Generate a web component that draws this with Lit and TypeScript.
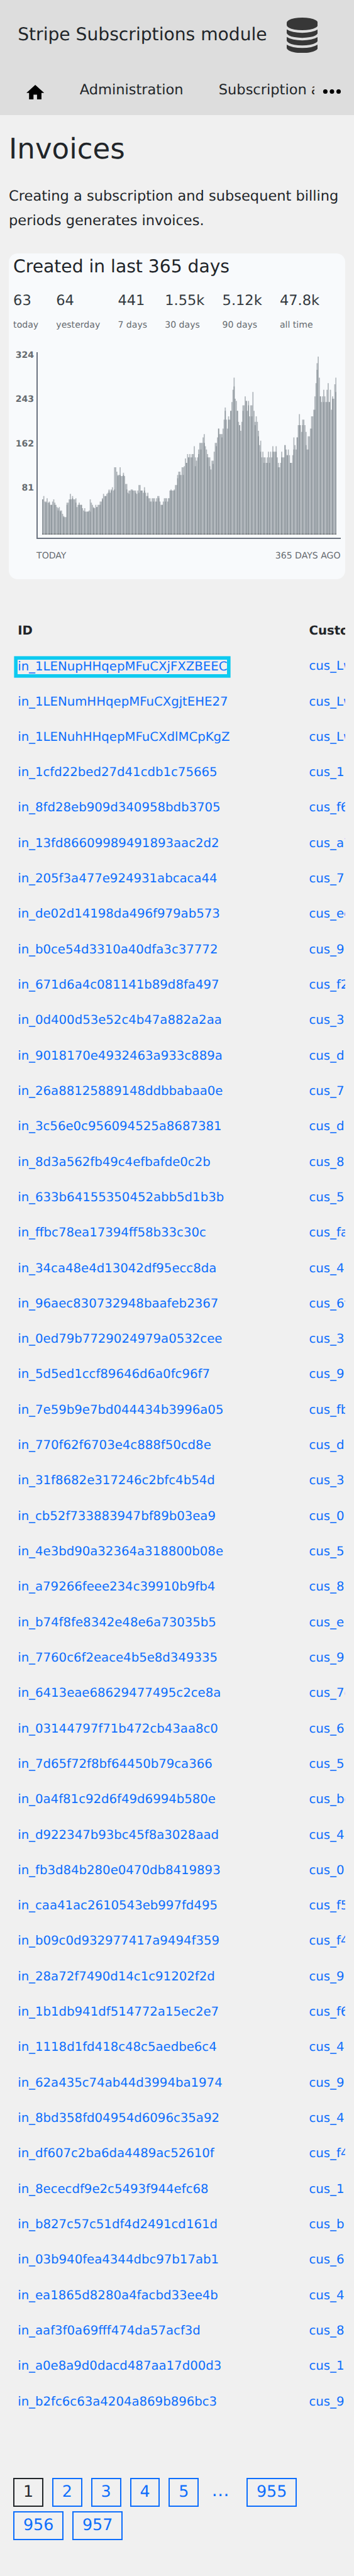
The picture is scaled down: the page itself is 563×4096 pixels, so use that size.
import { LitElement, html, css, svg } from "lit";
import { customElement } from "lit/decorators.js";

const INVOICES: [string, string][] = [
  ["1LENupHHqepMFuCXjFXZBEEC", "Lw"], ["1LENumHHqepMFuCXgjtEHE27", "Lw"], ["1LENuhHHqepMFuCXdlMCpKgZ", "Lw"],
  ["1cfd22bed27d41cdb1c75665", "1"], ["8fd28eb909d340958bdb3705", "f6"], ["13fd86609989491893aac2d2", "a7"],
  ["205f3a477e924931abcaca44", "7"], ["de02d14198da496f979ab573", "ec"], ["b0ce54d3310a40dfa3c37772", "9"],
  ["671d6a4c081141b89d8fa497", "f2"], ["0d400d53e52c4b47a882a2aa", "3"], ["9018170e4932463a933c889a", "d"],
  ["26a88125889148ddbbabaa0e", "7"], ["3c56e0c956094525a8687381", "d"], ["8d3a562fb49c4efbafde0c2b", "8"],
  ["633b64155350452abb5d1b3b", "5"], ["ffbc78ea17394ff58b33c30c", "fa"], ["34ca48e4d13042df95ecc8da", "4"],
  ["96aec830732948baafeb2367", "6f"], ["0ed79b7729024979a0532cee", "3"], ["5d5ed1ccf89646d6a0fc96f7", "9"],
  ["7e59b9e7bd044434b3996a05", "fb"], ["770f62f6703e4c888f50cd8e", "d"], ["31f8682e317246c2bfc4b54d", "3"],
  ["cb52f733883947bf89b03ea9", "0"], ["4e3bd90a32364a318800b08e", "5"], ["a79266feee234c39910b9fb4", "8"],
  ["b74f8fe8342e48e6a73035b5", "e"], ["7760c6f2eace4b5e8d349335", "9"], ["6413eae68629477495c2ce8a", "7c"],
  ["03144797f71b472cb43aa8c0", "6"], ["7d65f72f8bf64450b79ca366", "5"], ["0a4f81c92d6f49d6994b580e", "bc"],
  ["d922347b93bc45f8a3028aad", "4"], ["fb3d84b280e0470db8419893", "0"], ["caa41ac2610543eb997fd495", "f5"],
  ["b09c0d932977417a9494f359", "f4"], ["28a72f7490d14c1c91202f2d", "9"], ["1b1db941df514772a15ec2e7", "f6"],
  ["1118d1fd418c48c5aedbe6c4", "4"], ["62a435c74ab44d3994ba1974", "9"], ["8bd358fd04954d6096c35a92", "4"],
  ["df607c2ba6da4489ac52610f", "f4"], ["8ececdf9e2c5493f944efc68", "1"], ["b827c57c51df4d2491cd161d", "b"],
  ["03b940fea4344dbc97b17ab1", "6"], ["ea1865d8280a4facbd33ee4b", "4"], ["aaf3f0a69fff474da57acf3d", "8"],
  ["a0e8a9d0dacd487aa17d00d3", "1"], ["b2fc6c63a4204a869b896bc3", "9"],
];

const STATS = [
  ["63", "today"], ["64", "yesterday"], ["441", "7 days"],
  ["1.55k", "30 days"], ["5.12k", "90 days"], ["47.8k", "all time"],
];

// Chart columns, left to right. Each entry is the top of the column; "a/b" is a
// column shared by two days, the second value being the top of the shorter one.
const COLUMNS = `846/846 828 858 858/864 840 864 858/864 876 876/876 858 846 864/876 876 888 894/906 888
906/912 906 924 936/942 942 942 864/876 864 846 816/846 846 828/840 846 846 840/864 888 876 864/876 876
876/876 894 906 894/912 912 912 912/912 906 846/912 864 876 888/894 894 876 888/888 876 876 858/876 858
840/846 816 828 828/828 816 810 792/798 810 792/798 780 798 672/792 672 696 714/720 714 672/714 720 720
702/714 720 762 762/792 810 798/816 798 792 792/798 798 798 798/810 816 798 768/810 768 798/798 798 810
780/798 810 828 810/828 840 840/858 858 840 840/858 840 858 840/858 828 828/840 858 876 876/876 858 840
840/858 840 858 840/840 798 792/798 798 798 792/798 768 768 714/732 696 696/714 714 672 672/714 666 624
648/648 600 618/618 600 618 600/618 600 558 618/666 636 618 576/600 540 540/576 540 510 492/540 558 576
600/618 618 618/666 684 636 636/654 588 540 540/558 510 462/462 492 492 492/510 462 414 348/366 414 462
396/414 414 366/366 318 252 186/234 300 312 366/366 426 444/444 474 426 336/366 336 288 312/312 366
312/336 396 336 336/396 264 366 426/444 396 426 474/504 552 528/588 618 588 618/648 618 648 618/648 588
618/648 588 618 558/588 588 588 558/588 618 648/672 672 648 588/618 618 618 552/552 576 606/606 576 606
648/648 648 606 510/576 552 576 510/510 444 384/444 444 480 414/444 414 444 480/552 576 504/576 504 462
396/462 396 360 288/360 216 108/144 72 186 288/288 318 288 252/318 288 318 252/318 216 318/318 252 360
288/300 300 222 186/264`
  .split(/\s+/)
  .map((c) => c.split("/").map((v) => (Number(v) - 72) / 3));

const FLOOR = 322;
const silhouette =
  `M0 ${FLOOR}` + COLUMNS.map(([top], i) => `V${top}H${(i + 1) * 2}`).join("") + `V${FLOOR}Z`;
const shared = COLUMNS.map(([, low], i) =>
  low === undefined ? "" : `M${i * 2} ${low}h2V${FLOOR}h-2Z`
).join("");
const sharedFloor = COLUMNS.map(([, low], i) =>
  low === undefined ? "" : `M${i * 2} ${FLOOR - 2}h2v2h-2Z`
).join("");

@customElement("invoice-chart")
export class InvoiceChart extends LitElement {
  static styles = css`
    :host { display: block; }
    .plot { display: flex; }
    .scale {
      width: 42px; margin-top: -6.5px; box-sizing: border-box; padding-right: 4.5px;
      text-align: right; font-weight: bold; color: #666b70;
      font-size: 16px; line-height: 26px;
    }
    .scale div { height: 80px; }
    .axes {
      width: 550px; height: 338px; box-sizing: border-box;
      border-left: 2.3px solid #6c7380; border-bottom: 2.3px solid #6c7380;
      padding: 8px 0 0 7.7px;
    }
    svg { display: block; }
    .bars { fill: #6c757d; fill-opacity: 0.5; }
    .floor { fill: #333; fill-opacity: 0.25; }
    .range {
      display: flex; justify-content: space-between;
      margin: 14.7px 0 0 42px; width: 549.5px;
      font-size: 16px; line-height: 32px; color: #666b70;
    }
  `;
  render() {
    return html`
      <div class="plot">
        <div class="scale">${[324, 243, 162, 81].map((n) => html`<div>${n}</div>`)}</div>
        <div class="axes">
          <svg width="532" height="322" viewBox="0 0 532 322">
            ${svg`<path class="bars" d=${silhouette} /><path class="bars" d=${shared} />
            <rect class="floor" x="0" y="320" width="532" height="2" /><path class="floor" d=${sharedFloor} />`}
          </svg>
        </div>
      </div>
      <div class="range"><span>TODAY</span><span>365 DAYS AGO</span></div>
    `;
  }
}

@customElement("app-root")
export class AppRoot extends LitElement {
  static styles = css`
    :host { display: block; background: #f0f0f0; overflow: hidden; }
    .page {
      zoom: 0.88; width: 640px; height: 4655px; overflow: hidden;
      font-family: "DejaVu Sans", sans-serif; font-size: 25.6px; color: #212529;
      text-rendering: geometricPrecision; background: #f0f0f0;
    }
    a { color: #0d6efd; text-decoration: none; }
    header { background: #ddd; height: 208px; }
    .brand { display: flex; align-items: center; height: 128px; padding-left: 32px; }
    .brand span { width: 486px; font-size: 32px; line-height: 48px; white-space: nowrap; margin-bottom: 2.5px; }
    .menu { display: flex; align-items: center; height: 80px; line-height: 40px; }
    .menu svg { display: block; flex: none; }
    .home { margin: 0 64px 3px 48px; }
    .links { display: flex; gap: 64px; width: 424px; overflow: hidden; white-space: nowrap; margin-bottom: 10px; }
    .more { margin-left: 15px; margin-bottom: 5px; }
    main { padding: 0 16px; }
    h1 { font-weight: normal; font-size: 51.2px; line-height: 62px; margin: 31px 0 0; }
    p { margin: 31.7px 0 0; line-height: 44.2px; white-space: nowrap; }
    .card { margin-top: 37.1px; height: 588px; box-sizing: border-box; padding: 0 8px; background: #f8fafc; border-radius: 16px; }
    h2 { font-weight: normal; font-size: 32px; line-height: 38px; margin: 0; padding-top: 4px; }
    .stats { display: flex; gap: 32px; height: 112.6px; margin-top: 23.2px; }
    .stats b { display: block; font-weight: normal; line-height: 40px; color: #343a40; }
    .stats small { display: block; font-size: 16px; line-height: 26px; margin-top: 12px; color: #666b70; }
    .table { margin-top: 62px; overflow: hidden; }
    .row {
      display: grid; grid-template-columns: 526.5px 200px; padding-left: 16px;
      width: 727px; height: 64px; align-items: center; font-size: 22.4px; line-height: 26px; white-space: nowrap;
    }
    .head { font-weight: bold; }
    .id { display: flex; }
    .focus { margin-top: 2px; padding-bottom: 2px; line-height: 24px; box-shadow: 0 0 0 6.4px #0dcaf0; }
    .pager { display: flex; flex-wrap: wrap; align-items: flex-start; gap: 7.7px 16px; padding: 106px 8px 0; font-size: 28.8px; }
    .pager a { box-sizing: border-box; height: 52px; line-height: 44px; padding: 0 15.7px; border: 2.3px solid; }
    .pager .current { color: #212529; }
    .pager .gap { box-sizing: border-box; width: 54.4px; padding-left: 7px; font-size: 32px; line-height: 45.5px; color: #0d6efd; }
  `;

  page(n: number) {
    return html`<a class=${n === 1 ? "current" : ""}>${n}</a>`;
  }

  render() {
    return html`
      <div class="page">
        <header>
          <div class="brand">
            <span>Stripe Subscriptions module</span>
            <svg width="56" height="64" viewBox="0 0 1536 1792" preserveAspectRatio="none" fill="#373737">
              <path d="M768 768q237 0 443-43t325-127v170q0 69-103 128t-280 93.5-385 34.5-385-34.5-280-93.5-103-128v-170q119 84 325 127t443 43zm0 768q237 0 443-43t325-127v170q0 69-103 128t-280 93.5-385 34.5-385-34.5-280-93.5-103-128v-170q119 84 325 127t443 43zm0-384q237 0 443-43t325-127v170q0 69-103 128t-280 93.5-385 34.5-385-34.5-280-93.5-103-128v-170q119 84 325 127t443 43zm0-1152q208 0 385 34.5t280 93.5 103 128v128q0 69-103 128t-280 93.5-385 34.5-385-34.5-280-93.5-103-128v-128q0-69 103-128t280-93.5 385-34.5z" />
            </svg>
          </div>
          <nav class="menu">
            <svg class="home" width="32" height="27.2" viewBox="2 3 20 17">
              <path d="M10 20v-6h4v6h5v-8h3L12 3 2 12h3v8z" />
            </svg>
            <div class="links"><span>Administration</span><span>Subscription administration</span></div>
            <svg class="more" width="34" height="8" viewBox="0 0 34 8">
              <circle cx="5" cy="4" r="4" /><circle cx="17" cy="4" r="4" /><circle cx="29" cy="4" r="4" />
            </svg>
          </nav>
        </header>
        <main>
          <h1>Invoices</h1>
          <p>Creating a subscription and subsequent billing<br />periods generates invoices.</p>
          <section class="card">
            <h2>Created in last 365 days</h2>
            <div class="stats">
              ${STATS.map(([n, label]) => html`<div><b>${n}</b><small>${label}</small></div>`)}
            </div>
            <invoice-chart></invoice-chart>
          </section>
          <div class="table">
            <div class="row head"><span>ID</span><span>Customer</span></div>
            ${INVOICES.map(
              ([id, customer], i) => html`<div class="row">
                <div class="id"><a class=${i === 0 ? "focus" : ""}>in_${id}</a></div>
                <a>cus_${customer}</a>
              </div>`
            )}
          </div>
          <nav class="pager">
            ${[1, 2, 3, 4, 5].map((n) => this.page(n))}<span class="gap">…</span>${[955, 956, 957].map((n) => this.page(n))}
          </nav>
        </main>
      </div>
    `;
  }
}
